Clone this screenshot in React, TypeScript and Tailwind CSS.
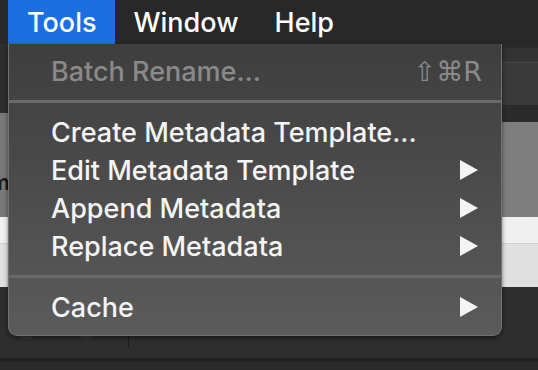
import React from 'react'

const font = { fontFamily: 'Inter, "Liberation Sans", "DejaVu Sans", sans-serif' }

const Arrow = () => (
  <svg width="18" height="20" viewBox="0 0 18 20" className="shrink-0">
    <polygon points="0,0 18,10 0,20" fill="#f4f4f4" />
  </svg>
)

const Item = ({ label, sub }: { label: string; sub?: boolean }) => (
  <div className="flex h-[38px] items-center justify-between pl-[42px] pr-[23px] text-[27px] font-medium leading-none text-[#f4f4f4]">
    <span>{label}</span>
    {sub && <Arrow />}
  </div>
)

const Sep = () => <div className="my-[10px] h-[3px] bg-[#6a6a6a]" />

export default function App() {
  return (
    <div className="relative h-[370px] w-[538px] overflow-hidden bg-[#2b2b2b]" style={font}>
      {/* menu bar */}
      <div className="flex h-[44px] items-stretch bg-[#282828] pl-[8px] text-[27px] font-medium leading-none text-white">
        <div className="flex items-center bg-[#1b6fe0] px-[19px]">Tools</div>
        <div className="flex items-center px-[18px]">Window</div>
        <div className="flex items-center px-[18px]">Help</div>
      </div>

      {/* app window behind the menu */}
      <div className="flex">
        <div className="flex w-[128px] flex-col">
          <div className="h-[69px] bg-[#2d2d2d]" />
          <div className="relative h-[104px] bg-[#787878]">
            <span className="absolute left-[-10px] top-[58px] text-[22px] font-semibold leading-none text-[#1a1a1a]">m</span>
          </div>
        </div>
        <div className="flex flex-1 flex-col">
          <div className="h-[4px] bg-[#2a2a2a]" />
          <div className="h-[14px] bg-[#333333]" />
          <div className="h-[43px] border-t border-[#454545] bg-[#3a3a3a]" />
          <div className="h-[17px] bg-[#2b2b2b]" />
          <div className="h-[95px] bg-gradient-to-r from-[#777777] to-[#7e7e7e]" />
        </div>
      </div>
      <div className="h-[26px] bg-[#f0f0f0]" />
      <div className="h-[44px] border-t border-[#cfcfcf] bg-[#e0e0e0]" />
      <div className="flex h-[71px] bg-[#2e2e2e]">
        <div className="flex w-[128px] items-start gap-[37px] pl-[15px] pt-[29px]">
          <div className="h-[23px] w-[23px] rounded-full bg-[#3c3c3c]" />
          <div className="h-[23px] w-[23px] rounded-full bg-[#3c3c3c]" />
        </div>
        <div className="mt-[48px] h-[13px] w-px bg-[#1a1a1a]" />
      </div>
      <div className="h-[4px] bg-[#222222]" />

      {/* dropdown menu */}
      <div className="absolute left-[8px] top-[44px] w-[494px] rounded-b-[9px] border-x border-b border-[#727272] bg-gradient-to-b from-[#3e3e3e] to-[#5b5b5b] pb-[9px] pt-[8px] shadow-[0_2px_4px_rgba(0,0,0,0.5)]">
        <div className="flex h-[38px] items-center justify-between pl-[42px] pr-[19px] text-[27px] font-medium leading-none text-[#8a8a8a]">
          <span>Batch Rename...</span>
          <span style={{ fontFamily: '"DejaVu Sans", Inter, sans-serif' }} className="text-[27px]">⇧⌘R</span>
        </div>
        <Sep />
        <Item label="Create Metadata Template..." />
        <Item label="Edit Metadata Template" sub />
        <Item label="Append Metadata" sub />
        <Item label="Replace Metadata" sub />
        <Sep />
        <Item label="Cache" sub />
      </div>
    </div>
  )
}
